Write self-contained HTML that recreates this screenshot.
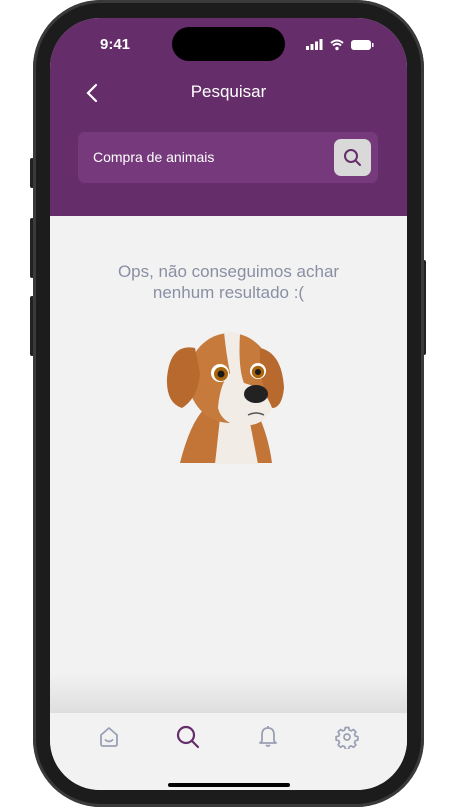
<!DOCTYPE html>
<html><head><meta charset="utf-8"><style>
body{margin:0;width:457px;height:807px;background:#fff;position:relative;overflow:hidden;font-family:"Liberation Sans",Arial,sans-serif}
.phone{position:absolute;left:33px;top:0;width:391px;height:807px;border-radius:68px;background:#1c1c1c;box-shadow:inset 0 0 0 3px #3a3a3a}
.screen{position:absolute;left:50px;top:18px;width:357px;height:772px;border-radius:50px;overflow:hidden;background:#f2f2f2}
.hdr{position:absolute;left:0;top:0;width:357px;height:198px;background:#652d6a}
.btn{position:absolute;background:#222;width:4px;left:30px;border-radius:2px}
</style></head><body>
<div class="btn" style="top:158px;height:30px"></div>
<div class="btn" style="top:218px;height:60px"></div>
<div class="btn" style="top:296px;height:60px"></div>
<div class="btn" style="left:422px;top:260px;height:95px"></div>
<div class="phone"></div>
<div class="screen">
 <div class="hdr">
  <div style="position:absolute;left:50px;top:18px;color:#fff;font-weight:bold;font-size:15px">9:41</div>
  <div style="position:absolute;left:122px;top:9px;width:113px;height:34px;border-radius:17px;background:#000"></div>
  <svg style="position:absolute;left:255px;top:20px" width="80" height="14">
   <rect x="1" y="8" width="3" height="4" fill="#fff"/><rect x="5.5" y="6" width="3" height="6" fill="#fff"/><rect x="10" y="3.5" width="3" height="8.5" fill="#fff"/><rect x="14.5" y="1" width="3" height="11" fill="#fff"/>
   <path d="M26 5 Q32 0 38 5 M28 7.5 Q32 4 36 7.5" stroke="#fff" stroke-width="2" fill="none"/><circle cx="32" cy="10.5" r="1.7" fill="#fff"/>
   <rect x="46" y="2" width="20" height="10" rx="3" fill="#fff"/><rect x="67" y="5" width="1.5" height="4" fill="#fff"/>
  </svg>
  <svg style="position:absolute;left:35px;top:64px" width="14" height="22"><path d="M11 3 L3 11 L11 19" stroke="#fff" stroke-width="2.2" fill="none" stroke-linecap="round"/></svg>
  <div style="position:absolute;left:0;width:357px;top:64px;text-align:center;color:#fff;font-size:17px">Pesquisar</div>
  <div style="position:absolute;left:28px;top:114px;width:300px;height:51px;border-radius:7px;background:#763a7c">
   <div style="position:absolute;left:15px;top:17px;color:#fff;font-size:14px">Compra de animais</div>
   <div style="position:absolute;left:256px;top:7px;width:37px;height:37px;border-radius:7px;background:#d9d9d9">
    <svg width="37" height="37"><circle cx="17" cy="17" r="6" stroke="#652d6a" stroke-width="2" fill="none"/><path d="M21.5 21.5 L26 26" stroke="#652d6a" stroke-width="2" stroke-linecap="round"/></svg>
   </div>
  </div>
 </div>
 <div style="position:absolute;left:0;width:357px;top:243px;text-align:center;color:#8a8fa3;font-size:17px;line-height:21px">Ops, não conseguimos achar<br>nenhum resultado :(</div>
 <svg style="position:absolute;left:110px;top:310px" width="130" height="140" viewBox="0 0 130 140">
  <path d="M20 135 Q30 95 45 80 L95 80 Q108 105 112 135 Z" fill="#c27537"/>
  <path d="M55 136 L60 90 L90 95 L98 136 Z" fill="#f1ece6"/>
  <ellipse cx="70" cy="50" rx="42" ry="45" fill="#c67a3c"/>
  <path d="M35 20 Q10 15 7 50 Q6 75 22 80 Q38 70 40 45 Z" fill="#b8692e"/>
  <path d="M100 20 Q122 25 124 60 Q122 80 112 80 Q102 60 100 40 Z" fill="#b8692e"/>
  <path d="M64 4 Q75 3 80 6 Q78 40 84 55 Q105 60 112 80 Q105 98 82 98 Q62 96 58 80 Q60 55 70 45 Q66 25 64 4Z" fill="#f1ece6"/>
  <circle cx="60" cy="45" r="9" fill="#fff"/><circle cx="61" cy="46" r="7" fill="#a8650e"/><circle cx="61" cy="46" r="3.5" fill="#1a1a1a"/>
  <circle cx="98" cy="43" r="8" fill="#fff"/><circle cx="98" cy="44" r="6.2" fill="#a8650e"/><circle cx="98" cy="44" r="3" fill="#1a1a1a"/>
  <ellipse cx="96" cy="66" rx="12" ry="9" fill="#222"/>
  <path d="M88 87 Q96 83 104 87" stroke="#555" stroke-width="1.5" fill="none"/>
 </svg>
 <div style="position:absolute;left:0;top:655px;width:357px;height:40px;background:linear-gradient(#f2f2f2,#dedede)"></div>
 <div style="position:absolute;left:0;top:695px;width:357px;height:77px;background:#f2f2f2">
  <svg style="position:absolute;left:47px;top:12px" width="24" height="24"><path d="M4 10 L12 3 L20 10 V19 Q20 21 18 21 H6 Q4 21 4 19 Z" stroke="#9aa0b3" stroke-width="1.8" fill="none" stroke-linejoin="round"/><path d="M8.5 15 Q12 18 15.5 15" stroke="#9aa0b3" stroke-width="1.8" fill="none" stroke-linecap="round"/></svg>
  <svg style="position:absolute;left:125px;top:11px" width="26" height="26"><circle cx="11" cy="11" r="8" stroke="#652d6a" stroke-width="2.2" fill="none"/><path d="M17 17 L23 23" stroke="#652d6a" stroke-width="2.2" stroke-linecap="round"/></svg>
  <svg style="position:absolute;left:206px;top:11px" width="24" height="26"><path d="M6 17 V11 Q6 4 12 4 Q18 4 18 11 V17 L20 19 H4 Z" stroke="#9aa0b3" stroke-width="1.8" fill="none" stroke-linejoin="round"/><path d="M10 21 Q12 23 14 21" stroke="#9aa0b3" stroke-width="1.8" fill="none"/><path d="M12 2V4" stroke="#9aa0b3" stroke-width="1.8"/></svg>
  <svg style="position:absolute;left:285px;top:12px" width="24" height="24" viewBox="0 0 24 24"><path d="M10.3 2.5h3.4l.6 2.6 1.9.8 2.3-1.4 2.4 2.4-1.4 2.3.8 1.9 2.6.6v3.4l-2.6.6-.8 1.9 1.4 2.3-2.4 2.4-2.3-1.4-1.9.8-.6 2.6h-3.4l-.6-2.6-1.9-.8-2.3 1.4-2.4-2.4 1.4-2.3-.8-1.9-2.6-.6v-3.4l2.6-.6.8-1.9-1.4-2.3 2.4-2.4 2.3 1.4 1.9-.8z" stroke="#9aa0b3" stroke-width="1.7" fill="none" stroke-linejoin="round"/><circle cx="12" cy="12" r="3" stroke="#9aa0b3" stroke-width="1.7" fill="none"/></svg>
  <div style="position:absolute;left:118px;top:70px;width:122px;height:4px;border-radius:2px;background:#000"></div>
 </div>
</div>
</body></html>
